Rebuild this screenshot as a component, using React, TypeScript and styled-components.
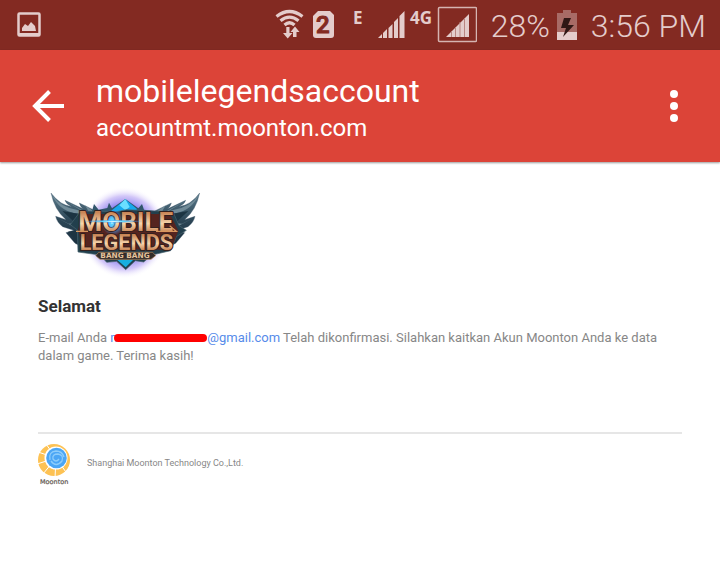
import React from 'react';
import styled, { createGlobalStyle } from 'styled-components';

const GlobalStyle = createGlobalStyle`
  * { box-sizing: border-box; }
  body { margin: 0; background: #fff; font-family: Roboto, sans-serif; }
`;

const StatusBar = styled.div`
  display: flex;
  align-items: center;
  height: 50px;
  padding: 0 14px 0 16px;
  background: #832a22;
  color: #e4cccb;
  font-size: 32px;
  font-weight: 300;
  line-height: 50px;
  white-space: nowrap;
  svg { display: block; flex: none; }
`;

const StatusIcons = styled.div`
  display: flex;
  align-items: center;
  margin-left: auto;
`;

const BatteryLevel = styled.span`
  margin: 2px 7px 0 14px;
`;

const Clock = styled.time`
  margin: 2px 0 0 14px;
`;

const AppBar = styled.header`
  display: flex;
  align-items: center;
  height: 112px;
  padding: 0 30px 0 32px;
  background: #dc4438;
  color: #fff;
  box-shadow: 0 1px 2px rgba(0, 0, 0, 0.4);
`;

const IconButton = styled.button`
  display: flex;
  flex: none;
  padding: 0;
  border: 0;
  background: none;
  color: inherit;
`;

const Titles = styled.div`
  flex: 1;
  min-width: 0;
  padding: 6px 16px 0 32px;
`;

const Title = styled.h1`
  margin: 0;
  font-size: 32px;
  font-weight: 400;
  line-height: 38px;
`;

const Host = styled.div`
  font-size: 24px;
  line-height: 36px;
`;

const Content = styled.main`
  padding: 18px 38px;
  color: #878787;
`;

const Logo = styled.svg`
  display: block;
  width: 170px;
  height: 105px;
  margin-left: 2px;
`;

const Heading = styled.h2`
  margin: 10px 0 12px;
  color: #333;
  font-size: 17px;
  font-weight: 700;
  line-height: 22px;
`;

const Message = styled.p`
  margin: 0;
  font-size: 13px;
  line-height: 18px;
`;

const MailLink = styled.a`
  color: #568bea;
  text-decoration: none;
`;

const Redacted = styled.span`
  display: inline-block;
  position: relative;
  width: 97px;
  &::after {
    content: '';
    position: absolute;
    left: 4px;
    right: 0;
    top: 5px;
    height: 8px;
    border-radius: 4px;
    background: #f00;
  }
`;

const Footer = styled.footer`
  display: flex;
  align-items: center;
  gap: 16px;
  margin-top: 67px;
  padding-top: 9px;
  border-top: 2px solid #e6e6e6;
  font-size: 9px;
`;

const Company = styled.span`
  margin-bottom: 4px;
`;

function StatusGlyphs() {
  return (
    <svg width="206" height="50" viewBox="270 0 206 50" aria-hidden="true" fill="#e4cccb">
      <g fill="none" stroke="#e4cccb" strokeWidth="3.2">
        <path d="M275.500 16.500Q288.500 6.500 301.500 16.500M279.500 20.800Q288.500 13.500 297.500 20.800M283.500 25Q288.500 20.500 293.500 25" />
      </g>
      <path d="M285.300 27h3.200v6h3l-4.800 5.500-4.700-5.500h3.300zM292 37v-5h-2.500l4.500-5.500 4.500 5.500H295.500v5z" />
      <path d="M317 11h12l4 4v20q0 3-3 3h-15q-3 0-3-3V16z" />
      <text x="315" y="33" fill="#832a22" stroke="#832a22" strokeWidth="1" fontSize="24" fontWeight="500" fontFamily="Roboto">2</text>
      <text x="352" y="24" fontSize="17" fontWeight="700" fontFamily="Open Sans">E</text>
      <text x="409" y="24" fontSize="17" fontWeight="700" fontFamily="Open Sans">4G</text>
      <path d="M377 38l4-4v4zM382 33l4-4v9h-4zM387.500 28l4-4v14h-4zM393 22l4-4v20h-4zM398.500 16l5-5v27h-5z" />
      <rect x="437.500" y="7.500" width="38" height="34" rx="1" fill="none" stroke="#d5b4b1" strokeWidth="1.500" />
      <path d="M445 37l23-23v23z" />
      <path d="M450.500 31v6M454.500 27v10M459 22v15M463.500 18v19" stroke="#b98581" strokeWidth="1" />
    </svg>
  );
}

function GameLogo() {
  return (
    <Logo viewBox="0 0 510 315" role="img" aria-label="Mobile Legends Bang Bang">
      <defs>
        <radialGradient id="aura">
          <stop offset=".6" stopColor="#7e74ed" stopOpacity=".9" />
          <stop offset=".8" stopColor="#b5a2f4" stopOpacity=".6" />
          <stop offset="1" stopColor="#fff" stopOpacity="0" />
        </radialGradient>
        <linearGradient id="wing" x2="0" y2="1">
          <stop stopColor="#5b7b8c" />
          <stop offset=".5" stopColor="#2c4656" />
          <stop offset="1" stopColor="#172b3a" />
        </linearGradient>
        <linearGradient id="gold" x2="0" y2="1">
          <stop offset=".2" stopColor="#c98556" />
          <stop offset=".55" stopColor="#f6d5ac" />
          <stop offset=".9" stopColor="#bb6b3b" />
        </linearGradient>
        <radialGradient id="flare">
          <stop stopColor="#fff" />
          <stop offset=".35" stopColor="#59d5ff" />
          <stop offset="1" stopColor="#3889ff" stopOpacity="0" />
        </radialGradient>
      </defs>
      <ellipse cx="253" cy="158" rx="132" ry="138" fill="url(#aura)" />
      <g id="left-wing">
        <path fill="url(#wing)" stroke="#395366" strokeWidth="1" d="M33 39Q60 76 96 80Q77 72 75 61L132 88Q121 82 118 69L166 92 172 120 135 205 105 190 78 158 101 151 68 140Q51 128 47 109L78 119Q44 91 33 39Z" />
        <path fill="#718b98" d="M36 45Q61 82 115 91L140 103 102 99Q57 90 36 45ZM78 64l52 28 17 5-12-21 28 19-12 13zM52 114l34 17 23-2-12 9z" />
        <path fill="#1c3442" d="M67 93l47 8-12 24zM84 155l30-4 6 42z" />
      </g>
      <use href="#left-wing" transform="matrix(-1 0 0 1 512 0)" />
      <path fill="#31566b" d="M156 94l6-22 14 17 26-5 5-16 9 17 40-28 39 28 11-13 6 17 34 5-10 28H173z" />
      <path fill="#17a9ed" d="M214 92l42-34 36 30-34 19z" />
      <path fill="#6adfff" d="M238 76l18-19 13 24-13 10z" />
      <path fill="#223f4d" stroke="#49636e" strokeWidth="2" d="M112 150l-21-16 31-41 109 2 28-6 140 6 18 42 22 14-30 19-17 42-56 13-25 21-25-4-29 27-27-25-30 3-20-22-66-9z" />
      <path fill="#56241f" d="M125 102h265l25 50-22 57-266-2-12-59z" />
      <path fill="#17afe0" d="M232 240h47l-22 22z" />
      <ellipse cx="220" cy="127" rx="36" ry="40" fill="url(#flare)" />
      <g fontFamily="Roboto" fontWeight="700" fill="url(#gold)" stroke="#34201e" strokeWidth="6" strokeLinejoin="round" paintOrder="stroke">
        <text x="115" y="153" fontSize="78"><tspan fontSize="82">M</tspan>OBILE</text>
        <text x="119" y="209" fontSize="65">LEGENDS</text>
      </g>
      <path fill="none" stroke="#d8965e" strokeWidth="4" d="M108 154h36m204 0h61l-20-17" />
      <ellipse cx="216" cy="126" rx="14" ry="22" fill="url(#flare)" />
      <ellipse cx="220" cy="124" rx="90" ry="5" fill="url(#flare)" />
      <path fill="#332d2c" stroke="#b38759" strokeWidth="2" d="M176 217h162l9 10-14 11H180l-13-11z" />
      <text x="181" y="235" fill="#e3c39b" fontFamily="DejaVu Sans" fontWeight="700" fontSize="22">BANG BANG</text>
    </Logo>
  );
}

function MoontonLogo() {
  return (
    <svg width="33" height="44" viewBox="0 0 33 44" role="img" aria-label="Moonton">
      <circle cx="16" cy="17" r="16" fill="#fdc254" />
      <path d="M18 15L0 9M18 15L-1 21M18 15L5 31M18 15l-1 20M18 15l12 17M18 15L8 1" stroke="#fff" strokeWidth="1" />
      <circle cx="18" cy="15" r="11.500" fill="#fff" />
      <circle cx="18.500" cy="15" r="10.300" fill="#4ba6f5" />
      <path d="M12 17q-2-8 6-9 6 0 8 6M13 18q5 7 11 0 2-6-4-7-6 0-5 5 3 4 6 0" fill="none" stroke="#8dcdfb" strokeWidth="1.300" />
      <text x="2" y="41" fill="#625750" stroke="#625750" strokeWidth=".2" fontFamily="DejaVu Sans" fontSize="6.500">Moonton</text>
    </svg>
  );
}

export default function App() {
  return (
    <>
      <GlobalStyle />
      <StatusBar>
        <svg width="26" height="28" viewBox="0 0 26 28" fill="none" aria-hidden="true">
          <rect x="2.500" y="2.500" width="21" height="22" rx="1" stroke="#e4cccb" strokeWidth="2.500" />
          <path fill="#e4cccb" d="M3 22h20v3H3zM6 20v-3l3-4 3 2 3-4 4 4 1 5z" />
        </svg>
        <StatusIcons>
          <StatusGlyphs />
          <BatteryLevel>28%</BatteryLevel>
          <svg width="20" height="32" viewBox="0 0 20 32" aria-hidden="true">
            <path fill="#a86b66" d="M6 1h8v3h6v27H0V4h6z" />
            <path fill="#e4cccb" d="M0 23h20v8H0z" />
            <path fill="#301715" d="M7 9h7l-3 7h6L6 28l3-9H4z" />
          </svg>
          <Clock>3:56 PM</Clock>
        </StatusIcons>
      </StatusBar>
      <AppBar>
        <IconButton aria-label="Back">
          <svg width="32" height="32" viewBox="0 0 32 32" fill="none" stroke="#fff" strokeWidth="4">
            <path d="M32 16H4M17.500 1.500L3 16l14.500 14.500" />
          </svg>
        </IconButton>
        <Titles>
          <Title>mobilelegendsaccount</Title>
          <Host>accountmt.moonton.com</Host>
        </Titles>
        <IconButton aria-label="More options">
          <svg width="32" height="32" viewBox="0 0 32 32" fill="#fff">
            <circle cx="16" cy="4" r="4" />
            <circle cx="16" cy="16" r="4" />
            <circle cx="16" cy="28" r="4" />
          </svg>
        </IconButton>
      </AppBar>
      <Content>
        <GameLogo />
        <Heading>Selamat</Heading>
        <Message>
          E-mail Anda <MailLink href="#"><Redacted>m</Redacted>@gmail.com</MailLink> Telah dikonfirmasi. Silahkan kaitkan Akun Moonton Anda ke data dalam game. Terima kasih!
        </Message>
        <Footer>
          <MoontonLogo />
          <Company>Shanghai Moonton Technology Co.,Ltd.</Company>
        </Footer>
      </Content>
    </>
  );
}
